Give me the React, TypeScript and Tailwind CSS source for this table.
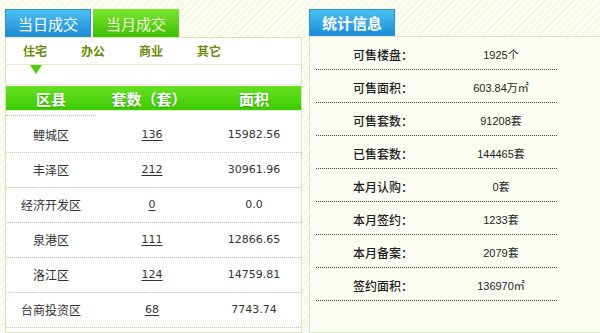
const SUB_TABS = ["住宅", "办公", "商业", "其它"];

const ROWS = [
  { name: "鲤城区", count: "136", area: "15982.56" },
  { name: "丰泽区", count: "212", area: "30961.96" },
  { name: "经济开发区", count: "0", area: "0.0" },
  { name: "泉港区", count: "111", area: "12866.65" },
  { name: "洛江区", count: "124", area: "14759.81" },
  { name: "台商投资区", count: "68", area: "7743.74" },
];

const STATS = [
  { label: "可售楼盘：", value: "1925个" },
  { label: "可售面积：", value: "603.84万㎡" },
  { label: "可售套数：", value: "91208套" },
  { label: "已售套数：", value: "144465套" },
  { label: "本月认购：", value: "0套" },
  { label: "本月签约：", value: "1233套" },
  { label: "本月备案：", value: "2079套" },
  { label: "签约面积：", value: "136970㎡" },
];

const cjk = "font-['Noto_Sans_CJK_SC',sans-serif]";

export default function App() {
  return (
    <div
      className={`w-[600px] h-[333px] overflow-hidden flex gap-[7px] pl-[5px] pt-[9px] bg-[repeating-linear-gradient(135deg,#f6f8e6_0px,#f6f8e6_2px,#fcfdf4_2px,#fcfdf4_5px)] ${cjk}`}
    >
      {/* left: deals */}
      <div className="w-[297px] shrink-0 flex flex-col">
        <div className="h-[28px] flex gap-[2px]">
          <div className="w-[86px] flex items-center justify-center bg-linear-to-b from-[#4cc0f4] to-[#1b8cd6] border border-[#2a93d4] text-white text-[15px] leading-none">
            当日成交
          </div>
          <div className="w-[86px] flex items-center justify-center bg-linear-to-b from-[#7ce62c] to-[#3dbf00] text-[#f2ffd8] text-[15px] leading-none">
            当月成交
          </div>
        </div>
        <div className="flex-1 border border-[#d9e6b2] bg-white">
          <div className="h-[27px] flex items-center border-b border-[#e2ecc6]">
            {SUB_TABS.map((t) => (
              <div key={t} className="w-[58px] text-center text-[12px] font-bold text-[#6d8d0c] leading-none">
                {t}
              </div>
            ))}
          </div>
          <div className="h-[20px] border-b border-[#e6eed0] pl-[24px]">
            <svg width="12" height="10" viewBox="0 0 12 10">
              <polygon points="0,0 12,0 6,9" fill="#4fd010" />
            </svg>
          </div>
          <div className="mt-[1px] h-[24px] flex items-center bg-linear-to-b from-[#66e020] to-[#3ccb00] text-white text-[15px] font-bold leading-none [text-shadow:0_1px_1px_#2f9f00]">
            <div className="w-[90px] text-center">区县</div>
            <div className="w-[112px] text-center pr-[6px]">套数（套）</div>
            <div className="w-[92px] text-center">面积</div>
          </div>
          <div className="h-[6px] border-t border-[#e8f3d0]">
            <div className="w-[90px] h-[5px] border-b border-dotted border-[#b8b8b8]" />
          </div>
          <div className="mt-[2px]">
            {ROWS.map((r) => (
              <div key={r.name} className="h-[35px] flex items-center border-b border-dotted border-[#bdbdbd] text-[12px] text-[#333]">
                <div className="w-[90px] text-center">{r.name}</div>
                <div className="w-[112px] text-center text-[11px] font-['DejaVu_Sans',sans-serif]">
                  <span className="underline underline-offset-2">{r.count}</span>
                </div>
                <div className="w-[92px] text-center text-[11px] font-['DejaVu_Sans',sans-serif]">{r.area}</div>
              </div>
            ))}
          </div>
        </div>
      </div>

      {/* right: stats */}
      <div className="w-[300px] shrink-0 flex flex-col">
        <div className="h-[27px] flex">
          <div className="w-[86px] flex items-center justify-center bg-linear-to-b from-[#4cc0f4] to-[#1b8cd6] border border-[#2a93d4] text-white text-[15px] font-bold leading-none">
            统计信息
          </div>
        </div>
        <div className="flex-1 border border-[#dde7bd] bg-[#fcfdf2]">
          <div className="ml-[6px] w-[241px]">
            {STATS.map((s) => (
              <div key={s.label} className="h-[33px] flex items-end pb-[7px] border-b border-dotted border-[#444]">
                <div className="w-[130px] pl-[37px] text-[12px] leading-[14px] text-[#1e1e1e] font-medium">{s.label}</div>
                <div className="w-[110px] text-center text-[11px] leading-[14px] text-[#1e1e1e] font-['Liberation_Sans','Noto_Sans_CJK_SC',sans-serif]">
                  {s.value}
                </div>
              </div>
            ))}
          </div>
        </div>
      </div>
    </div>
  );
}
